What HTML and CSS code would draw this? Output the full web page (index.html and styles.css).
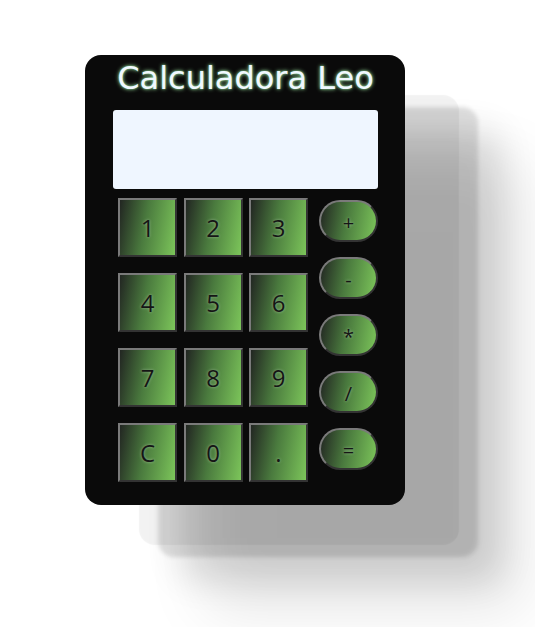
FILE: index.html
```html
<!DOCTYPE html>
<html lang="es">
<head>
<meta charset="utf-8">
<title>Calculadora Leo</title>
<link rel="stylesheet" href="styles.css">
</head>
<body>
<div class="calc">
  <h1 class="title">Calculadora Leo</h1>
  <div class="display"></div>
  <div class="keys">
    <div class="digits">
      <button class="key">1</button>
      <button class="key">2</button>
      <button class="key">3</button>
      <button class="key">4</button>
      <button class="key">5</button>
      <button class="key">6</button>
      <button class="key">7</button>
      <button class="key">8</button>
      <button class="key">9</button>
      <button class="key">C</button>
      <button class="key">0</button>
      <button class="key">.</button>
    </div>
    <div class="ops">
      <button class="op">+</button>
      <button class="op">-</button>
      <button class="op">*</button>
      <button class="op">/</button>
      <button class="op">=</button>
    </div>
  </div>
</div>
</body>
</html>
```
FILE: styles.css
```css
html, body {
  margin: 0;
  padding: 0;
  background: #ffffff;
}
body {
  box-sizing: border-box;
  min-height: 100vh;
  font-family: "DejaVu Sans", "Noto Sans", sans-serif;
  padding: 55px 0 0 85px;
  overflow: hidden;
}
.calc {
  box-sizing: border-box;
  width: 320px;
  height: 450px;
  background: #0a0a0a;
  border-radius: 16px;
  padding: 0 27px 0 28px;
  box-shadow:
    54px 40px 1px rgba(0,0,0,0.05),
    73px 52px 4px rgba(0,0,0,0.12),
    95px 75px 35px rgba(0,0,0,0.12),
    120px 105px 60px rgba(0,0,0,0.1);
}
.title {
  margin: 0;
  height: 55px;
  line-height: 46px;
  text-align: center;
  font-size: 32px;
  font-weight: 400;
  color: #f0f8ff;
  text-shadow: 0 0 4px #9fe0a0, 0 0 2px #6ac07a;
  white-space: nowrap;
  margin-left: -4px;
  margin-right: -4px;
}
.display {
  height: 79px;
  background: #eff6ff;
  border-radius: 3px;
}
.keys {
  display: flex;
  margin-top: 9px;
  padding-left: 5px;
  gap: 11px;
}
.digits {
  display: grid;
  grid-template-columns: repeat(3, 59px);
  grid-auto-rows: 59px;
  column-gap: 6.5px;
  row-gap: 16px;
}
.key, .op {
  box-sizing: border-box;
  margin: 0;
  padding: 0;
  font-family: "Open Sans", "DejaVu Sans", sans-serif;
  font-size: 24px;
  font-weight: 400;
  color: #151515;
  background: linear-gradient(100deg, #222622 0%, #4a7a3e 45%, #7cc55a 100%);
  border: 2px solid;
  border-color: #7a7a7a #333 #333 #7a7a7a;
  text-shadow: 0 0 3px rgba(200,220,200,0.6);
}
.ops {
  display: flex;
  flex-direction: column;
  gap: 15px;
  padding-top: 2px;
}
.op {
  width: 59px;
  height: 42px;
  border-radius: 21px;
  font-size: 20px;
  padding-top: 2px;
}
```
